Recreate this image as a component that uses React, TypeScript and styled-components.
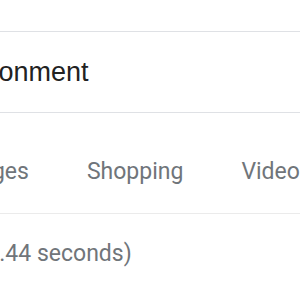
import React from "react";
import styled, { createGlobalStyle } from "styled-components";

const Global = createGlobalStyle`
  html, body { margin: 0; padding: 0; background: #fff; }
  body { width: 300px; height: 300px; overflow: hidden; }
`;

const Page = styled.div`
  width: 300px;
  height: 300px;
  overflow: hidden;
  background: #fff;
  display: flex;
  flex-direction: column;
`;

const TopBar = styled.div`
  height: 31px;
  flex-shrink: 0;
  border-bottom: 1px solid #dfe1e5;
`;

const SearchRow = styled.div`
  height: 80px;
  flex-shrink: 0;
  display: flex;
  align-items: center;
  border-bottom: 1px solid #dfe1e5;
  overflow: hidden;
`;

const Query = styled.span<{ $shift: number }>`
  margin-left: ${(p) => p.$shift}px;
  font-family: "Liberation Sans", Arial, sans-serif;
  font-size: 27px;
  color: #222;
  white-space: nowrap;
`;

const TabsClip = styled.div`
  overflow: hidden;
  flex-shrink: 0;
`;

const Tabs = styled.nav<{ $shift: number }>`
  height: 101px;
  box-sizing: border-box;
  padding-top: 46px;
  display: flex;
  gap: 58px;
  margin-left: ${(p) => p.$shift}px;
  border-bottom: 1px solid #ebebeb;
  width: 1000px;
`;

const Tab = styled.span`
  font-family: Roboto, Arial, sans-serif;
  font-size: 23px;
  line-height: 26px;
  color: #70757a;
  white-space: nowrap;
`;

const Stats = styled.div<{ $shift: number }>`
  padding-top: 27px;
  margin-left: ${(p) => p.$shift}px;
  font-family: Roboto, Arial, sans-serif;
  font-size: 23px;
  line-height: 26px;
  color: #70757a;
  white-space: nowrap;
`;

export default function App() {
  const tabs = ["All", "News", "Images", "Shopping", "Videos", "Maps"];
  return (
    <Page>
      <Global />
      <TopBar />
      <SearchRow>
        <Query $shift={-60}>environment</Query>
      </SearchRow>
      <TabsClip>
        <Tabs $shift={-247}>
          {tabs.map((t) => (
            <Tab key={t}>{t}</Tab>
          ))}
        </Tabs>
      </TabsClip>
      <Stats $shift={-312}>About 1,470,000,000 results (0.44 seconds)</Stats>
    </Page>
  );
}
